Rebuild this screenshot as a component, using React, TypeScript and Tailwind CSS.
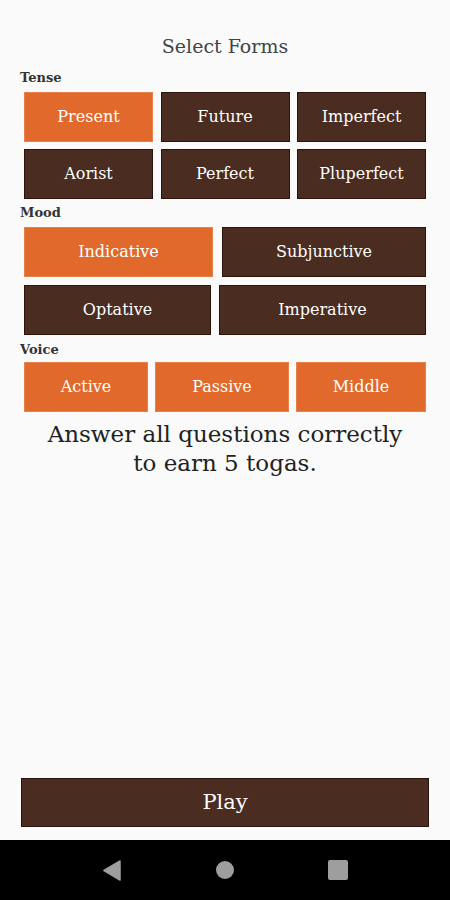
import type { JSX } from "react";

type Opt = { label: string; on: boolean; w: string };

const tenseRows: Opt[][] = [
  [
    { label: "Present", on: true, w: "w-[129px]" },
    { label: "Future", on: false, w: "w-[129px]" },
    { label: "Imperfect", on: false, w: "w-[129px]" },
  ],
  [
    { label: "Aorist", on: false, w: "w-[129px]" },
    { label: "Perfect", on: false, w: "w-[129px]" },
    { label: "Pluperfect", on: false, w: "w-[129px]" },
  ],
];

const moodRows: Opt[][] = [
  [
    { label: "Indicative", on: true, w: "w-[189px]" },
    { label: "Subjunctive", on: false, w: "w-[204px]" },
  ],
  [
    { label: "Optative", on: false, w: "w-[187px]" },
    { label: "Imperative", on: false, w: "w-[207px]" },
  ],
];

const voiceRow: Opt[] = [
  { label: "Active", on: true, w: "w-[124px]" },
  { label: "Passive", on: true, w: "w-[134px]" },
  { label: "Middle", on: true, w: "w-[130px]" },
];

function Choice({ opt }: { opt: Opt }): JSX.Element {
  return (
    <button
      type="button"
      className={`${opt.w} h-[50px] flex items-center justify-center text-[16px] text-white border ${
        opt.on ? "bg-[#e0692b] border-[#e8804a]" : "bg-[#4a2c20] border-[#2a140c]"
      }`}
    >
      {opt.label}
    </button>
  );
}

function Row({ items }: { items: Opt[] }): JSX.Element {
  return (
    <div className="flex justify-between pl-[24px] pr-[24px]">
      {items.map((o) => (
        <Choice key={o.label} opt={o} />
      ))}
    </div>
  );
}

function Label({ text }: { text: string }): JSX.Element {
  return <div className="pl-[20px] text-[13px] font-bold text-[#333] leading-[16px]">{text}</div>;
}

export default function App(): JSX.Element {
  return (
    <div
      className="w-[450px] h-[900px] bg-[#fafafa] flex flex-col"
      style={{ fontFamily: '"DejaVu Serif", "Liberation Serif", serif' }}
    >
      <div className="flex-1 flex flex-col">
        <h1 className="mt-[33px] text-center text-[19px] text-[#444] leading-[26px]">Select Forms</h1>

        <div className="mt-[11px]">
          <Label text="Tense" />
        </div>
        <div className="mt-[6px] flex flex-col gap-[7px]">
          {tenseRows.map((r, i) => (
            <Row key={i} items={r} />
          ))}
        </div>

        <div className="mt-[6px]">
          <Label text="Mood" />
        </div>
        <div className="mt-[6px] flex flex-col gap-[8px]">
          {moodRows.map((r, i) => (
            <Row key={i} items={r} />
          ))}
        </div>

        <div className="mt-[7px]">
          <Label text="Voice" />
        </div>
        <div className="mt-[4px]">
          <Row items={voiceRow} />
        </div>

        <p className="mt-[8px] text-center text-[23px] leading-[29px] text-[#222]">
          Answer all questions correctly
          <br />
          to earn 5 togas.
        </p>

        <div className="flex-1" />

        <div className="px-[21px] mb-[13px]">
          <button
            type="button"
            className="w-full h-[49px] bg-[#4a2c20] border border-[#2a140c] text-white text-[21px]"
          >
            Play
          </button>
        </div>
      </div>

      {/* system nav bar */}
      <div className="h-[60px] bg-black flex items-center">
        <div className="w-full flex justify-between items-center pl-[103px] pr-[102px]">
          <svg width="18" height="21" viewBox="0 0 18 21">
            <path d="M17 1 L1 10.5 L17 20 Z" fill="#9e9e9e" stroke="#9e9e9e" strokeLinejoin="round" strokeWidth="1.5" />
          </svg>
          <div className="w-[18px] h-[18px] rounded-full bg-[#9e9e9e]" />
          <div className="w-[20px] h-[20px] rounded-[2px] bg-[#9e9e9e]" />
        </div>
      </div>
    </div>
  );
}
